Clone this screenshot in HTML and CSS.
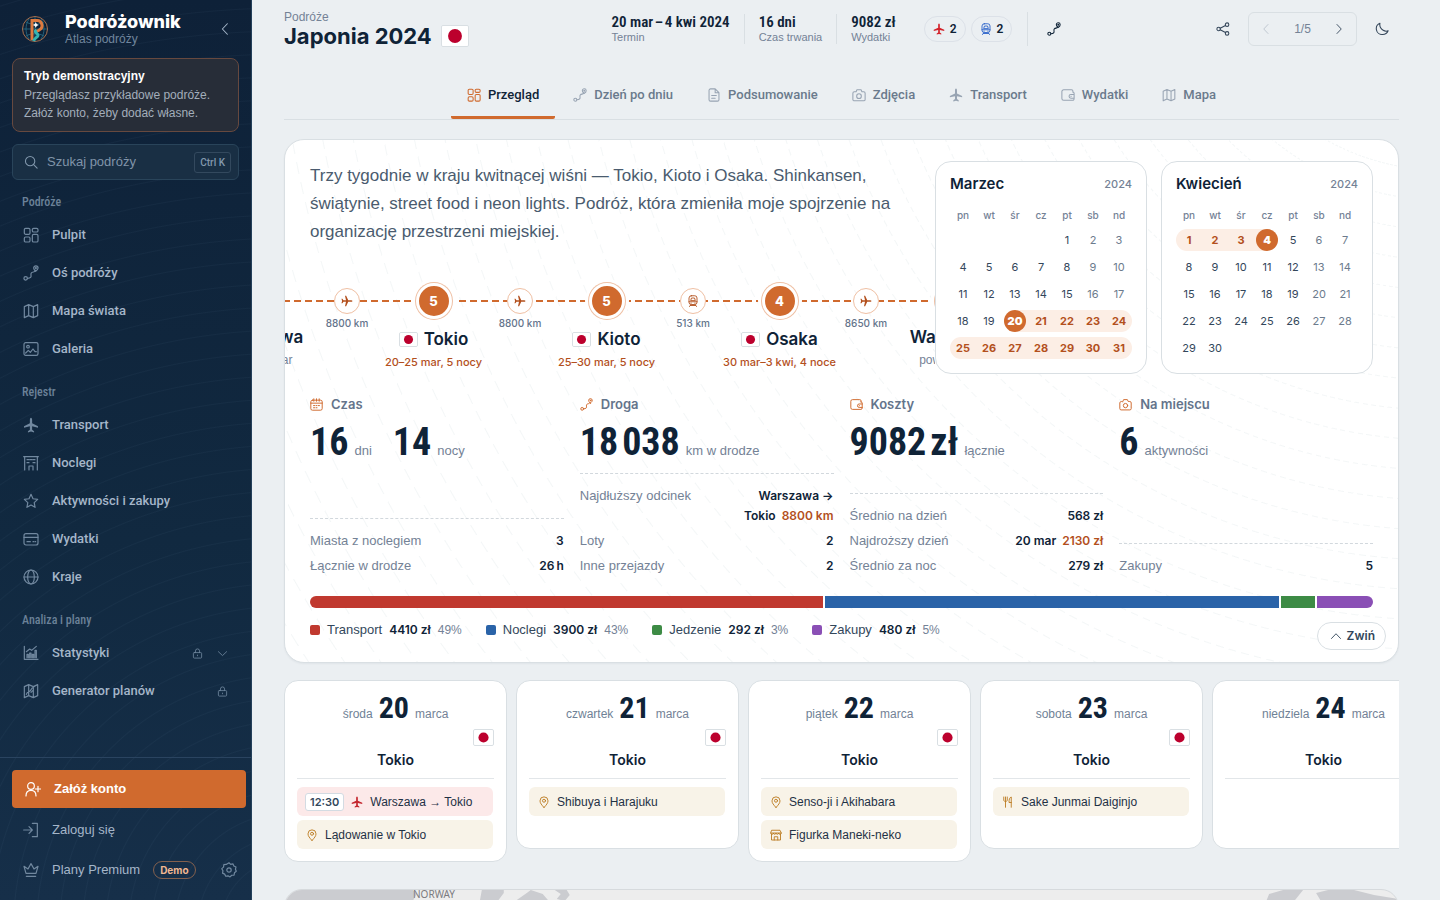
FILE: index.html
```html
<!DOCTYPE html>
<html lang="pl">
<head>
<meta charset="utf-8">
<meta name="viewport" content="width=device-width, initial-scale=1">
<title>Japonia 2024 – Podróżownik</title>
<link rel="stylesheet" href="styles.css">
</head>
<body>
<svg class="sprite" aria-hidden="true">
  <symbol id="i-grid" viewBox="0 0 24 24"><rect x="2" y="2" width="8.500" height="9" rx="2"/><rect x="14" y="2" width="8.500" height="5.500" rx="2"/><rect x="2" y="15" width="8.500" height="7.500" rx="2"/><rect x="14" y="11" width="8.500" height="11.500" rx="2"/></symbol>
  <symbol id="i-route" viewBox="0 0 24 24"><circle cx="4" cy="20" r="2.600"/><path d="M6.600 20c5 0 6-2 5.400-5s1-4 3.500-4.500S18 9 18.500 8"/><path d="M19 9.500c-2-2-3-3.400-3-5a3.300 3.300 0 0 1 6.600 0c0 1.600-1.600 3.500-3.600 5z"/><circle cx="19.300" cy="4.600" r=".8"/></symbol>
  <symbol id="i-map" viewBox="0 0 24 24"><path d="M2 5.500 8.500 2.500l7 3 6.500-3v16.500l-6.500 3-7-3-6.500 3zM8.500 2.500V19M15.500 5.500V22"/></symbol>
  <symbol id="i-plan" viewBox="0 0 24 24"><path d="M2 5.500 8.500 2.500l7 3 6.500-3v16.500l-6.500 3-7-3-6.500 3zM8.500 2.500V19M15.500 5.500V22M5 17c2-6 5-2 7-7s4-3 7-6M12 14l3-3"/></symbol>
  <symbol id="i-image" viewBox="0 0 24 24"><rect x="1.500" y="2.500" width="21" height="19" rx="2.500"/><circle cx="7.500" cy="8.500" r="2"/><path d="m4 18 4-4 3 3 4-5 3 4h2"/></symbol>
  <symbol id="i-plane" viewBox="0 0 24 24"><path class="solid" d="M12 1c1.100 0 1.700 1.600 1.700 3.500v5l8.800 4.200v2.300l-8.800-2v5l2.900 2.200v1.900L12 21.800l-4.600 1.300v-1.900l2.900-2.200v-5l-8.800 2v-2.300l8.800-4.200v-5C10.300 2.600 10.900 1 12 1z"/></symbol>
  <symbol id="i-hotel" viewBox="0 0 24 24"><path d="M2.500 22.500V2.500h19v20M1 2.500h22M6 7h3M10.500 7h3M15 7h3M6 11.500h3M15 11.500h3M9 22.500v-6h6v6"/></symbol>
  <symbol id="i-star" viewBox="0 0 24 24"><path d="m12 2 3 6.600 7 .9-5.200 4.900 1.300 7.100L12 18l-6.100 3.500 1.300-7.100L2 9.500l7-.9z"/></symbol>
  <symbol id="i-card" viewBox="0 0 24 24"><rect x="1.500" y="4" width="21" height="17" rx="3"/><path d="M1.500 9.500h21M6 16h5M15 16h1M18 16h1"/></symbol>
  <symbol id="i-globe" viewBox="0 0 24 24"><circle cx="12" cy="12" r="10.500"/><ellipse cx="12" cy="12" rx="5" ry="10.500"/><path d="M1.500 12h21"/></symbol>
  <symbol id="i-chart" viewBox="0 0 24 24"><path d="M2 2v19.500h20.500M5 10l5-4 3 2 7-6M6 19v-5h2v5M10 19v-7h2v7M14 19v-5h2v5M18 19V8h2v11"/></symbol>
  <symbol id="i-lock" viewBox="0 0 24 24"><rect x="3" y="10" width="18" height="12" rx="2"/><path d="M7.500 10V6.500a4.500 4.500 0 0 1 9 0V10M12 15.500v1.500"/></symbol>
  <symbol id="i-down" viewBox="0 0 24 24"><path d="m3 8 9 8.500L21 8"/></symbol>
  <symbol id="i-up" viewBox="0 0 24 24"><path d="m3 17 9-9.500 9 9.500"/></symbol>
  <symbol id="i-left" viewBox="0 0 24 24"><path d="m16 3-8.500 9 8.500 9"/></symbol>
  <symbol id="i-right" viewBox="0 0 24 24"><path d="m8 3 8.500 9L8 21"/></symbol>
  <symbol id="i-search" viewBox="0 0 24 24"><circle cx="10.500" cy="10.500" r="8"/><path d="m16.500 16.500 6 6"/></symbol>
  <symbol id="i-useradd" viewBox="0 0 24 24"><circle cx="9" cy="7.500" r="5"/><path d="M1.500 22.500c0-5 3-8.500 7.500-8.500s7.500 3.500 7.500 8.500M19.500 8v8M15.500 12h8"/></symbol>
  <symbol id="i-login" viewBox="0 0 24 24"><path d="M1 12h13M9 7l5 5-5 5M14 2h7.500v20H14"/></symbol>
  <symbol id="i-crown" viewBox="0 0 24 24"><path d="m4.500 17-3-10.500 6 4L12 2.500l4.500 8 6-4-3 10.500zM5 21.500h14"/></symbol>
  <symbol id="i-gear" viewBox="0 0 24 24"><path d="M12 1.200 14.500 3.500 18 2.800l1.300 3.100 3.200 1.500-.8 3.400 1.200 3.200-2.700 2.200-.6 3.500-3.500.2-2.600 2.500-3-1.700-3.400.7-1.600-3.200-3.200-1.500.6-3.500L1.200 10l2.600-2.300L4.300 4l3.500-.3z"/><circle cx="12" cy="12" r="3.300"/></symbol>
  <symbol id="i-share" viewBox="0 0 24 24"><circle cx="4.500" cy="12" r="3"/><circle cx="19" cy="4.500" r="3"/><circle cx="19" cy="19.500" r="3"/><path d="m7.200 10.600 9-4.700M7.200 13.400l9 4.700"/></symbol>
  <symbol id="i-moon" viewBox="0 0 24 24"><path d="M8.500 2C3.500 4 1.500 8.500 2.500 13.500c1 5 5.500 8.500 10.500 8 4.500-.4 8-2.900 9.500-6.500-2 .8-5.500 1-8.500-.8-4.500-2.700-6.500-7.200-5.500-12.200z"/></symbol>
  <symbol id="i-file" viewBox="0 0 24 24"><path d="M14 1.500H6a2.500 2.500 0 0 0-2.500 2.500v16A2.500 2.500 0 0 0 6 22.500h12a2.500 2.500 0 0 0 2.500-2.500V8zM14 1.500V8h6.500M8 13h8M8 17.500h6"/></symbol>
  <symbol id="i-camera" viewBox="0 0 24 24"><path d="M7 6.500 8.500 3h7L17 6.500h3A2.500 2.500 0 0 1 22.500 9v10.500A2.500 2.500 0 0 1 20 22H4a2.500 2.500 0 0 1-2.500-2.500V9A2.500 2.500 0 0 1 4 6.500z"/><circle cx="12" cy="14" r="4"/></symbol>
  <symbol id="i-wallet" viewBox="0 0 24 24"><path d="M20.500 7V5.500A2.500 2.500 0 0 0 18 3H4.500a3 3 0 0 0-3 3v12a3 3 0 0 0 3 3H20a2.500 2.500 0 0 0 2.500-2.500v-9A2.500 2.500 0 0 0 20 7M22.500 11H17a3.200 3.200 0 0 0 0 6.400h5.500M17 14.200h.5"/></symbol>
  <symbol id="i-calendar" viewBox="0 0 24 24"><rect x="1.500" y="4" width="21" height="18.500" rx="3"/><path d="M1.500 9.500h21M7 1.500V6M12 1.500V6M17 1.500V6M6.500 14h2M11 14h2M15.500 14h2M6.500 18h2M11 18h2"/></symbol>
  <symbol id="i-train" viewBox="0 0 24 24"><rect x="4" y="1.500" width="16" height="17.500" rx="4.500"/><path d="M7.500 10.500 9 6h6l1.500 4.500zM4 13.500h16M8 16.300h.5M15.500 16.300h.5M8 19l-3 4M16 19l3 4M7 21h10"/></symbol>
  <symbol id="i-pin" viewBox="0 0 24 24"><path d="M12 23c-5-5.500-8-9-8-13.300a8 8 0 0 1 16 0C20 14 17 17.500 12 23z"/><circle cx="12" cy="9.500" r="3"/></symbol>
  <symbol id="i-shop" viewBox="0 0 24 24"><path d="M4 2.500h16L22.500 8c0 3.500-5.200 3.500-5.200 0 0 3.500-5.300 3.500-5.300 0 0 3.500-5.300 3.500-5.300 0 0 3.500-5.200 3.500-5.200 0zM3 10.500v11.500h18V10.500M1.500 8h21M8.500 22v-6.500h7V22"/></symbol>
  <symbol id="i-fork" viewBox="0 0 24 24"><path d="M3.500 2v6c0 4 7 4 7 0V2M7 2v20.500M18.500 22.500V2c-3.500 1-4.500 5-4.500 11h4.500"/></symbol>
  <symbol id="i-jp" viewBox="0 0 30 22"><rect width="30" height="22" fill="#fff" stroke="none"/><circle cx="15" cy="11" r="8" fill="#bc002d" stroke="none"/></symbol>
</svg>

<div class="app">
<aside class="sidebar">
  <div class="brand">
    <svg class="logo" viewBox="0 0 28 28" aria-hidden="true">
      <circle cx="14" cy="14" r="12.500" fill="#0b2036" stroke="#a8704f" stroke-width="1"/>
      <path d="M2 14h24M14 2v24M5 7c5 3 13 3 18 0M5 21c5-3 13-3 18 0M8 4c-4 6-4 14 0 20M20 4c4 6 4 14 0 20" fill="none" stroke="#2a6f88" stroke-width=".8"/>
      <path d="M11 25V5.500h4.500a5 5 0 0 1 3 9.300c-1 .9-2 1.200-3.500 1.500" fill="none" stroke="#dd7a3f" stroke-width="3"/>
      <path d="M15.500 15c-4 2.500 3.500 3.500 1 6.500-1.500 1.500-3 2-4 4.500" fill="none" stroke="#35b3b0" stroke-width="3"/>
      <path d="m14.800 7 .9 2.100 2.100.9-2.100.9-.9 2.100-.9-2.100-2.100-.9 2.100-.9z" fill="#fff"/>
    </svg>
    <div class="brand-text"><strong>Podróżownik</strong><span>Atlas podróży</span></div>
    <button class="bare collapse" aria-label="Zwiń menu"><svg class="ic s14"><use href="#i-left"/></svg></button>
  </div>
  <div class="demo"><strong>Tryb demonstracyjny</strong><p>Przeglądasz przykładowe podróże.<br>Załóż konto, żeby dodać własne.</p></div>
  <label class="search"><svg class="ic s14"><use href="#i-search"/></svg><input type="search" placeholder="Szukaj podróży" aria-label="Szukaj podróży"><kbd>Ctrl K</kbd></label>
  <nav class="menu">
    <h2>Podróże</h2>
    <a href="#"><svg class="ic"><use href="#i-grid"/></svg>Pulpit</a>
    <a href="#"><svg class="ic"><use href="#i-route"/></svg>Oś podróży</a>
    <a href="#"><svg class="ic"><use href="#i-map"/></svg>Mapa świata</a>
    <a href="#"><svg class="ic"><use href="#i-image"/></svg>Galeria</a>
    <h2>Rejestr</h2>
    <a href="#"><svg class="ic"><use href="#i-plane"/></svg>Transport</a>
    <a href="#"><svg class="ic"><use href="#i-hotel"/></svg>Noclegi</a>
    <a href="#"><svg class="ic"><use href="#i-star"/></svg>Aktywności i zakupy</a>
    <a href="#"><svg class="ic"><use href="#i-card"/></svg>Wydatki</a>
    <a href="#"><svg class="ic"><use href="#i-globe"/></svg>Kraje</a>
    <h2>Analiza i plany</h2>
    <a href="#"><svg class="ic"><use href="#i-chart"/></svg>Statystyki<span class="marks"><svg class="ic s11"><use href="#i-lock"/></svg><svg class="ic s11"><use href="#i-down"/></svg></span></a>
    <a href="#"><svg class="ic"><use href="#i-plan"/></svg>Generator planów<span class="marks"><svg class="ic s11"><use href="#i-lock"/></svg></span></a>
  </nav>
  <div class="account">
    <a class="cta" href="#"><svg class="ic"><use href="#i-useradd"/></svg>Załóż konto</a>
    <a href="#"><svg class="ic"><use href="#i-login"/></svg>Zaloguj się</a>
    <div class="premium"><a href="#"><svg class="ic"><use href="#i-crown"/></svg>Plany Premium<span class="tag">Demo</span></a><button class="bare" aria-label="Ustawienia"><svg class="ic"><use href="#i-gear"/></svg></button></div>
  </div>
</aside>

<main class="main">
  <header class="top">
    <div class="trip"><a href="#">Podróże</a><h1>Japonia 2024<svg class="flag f-lg" role="img" aria-label="Japonia"><use href="#i-jp"/></svg></h1></div>
    <div class="facts">
      <div class="fact"><b>20 mar&hairsp;–&hairsp;4 kwi 2024</b><span>Termin</span></div>
      <div class="fact"><b>16 dni</b><span>Czas trwania</span></div>
      <div class="fact"><b>9082 zł</b><span>Wydatki</span></div>
      <div class="modes"><span class="mode air"><svg class="ic s12"><use href="#i-plane"/></svg>2</span><span class="mode rail"><svg class="ic s12"><use href="#i-train"/></svg>2</span></div>
      <button class="bare path" aria-label="Trasa"><svg class="ic s14"><use href="#i-route"/></svg></button>
    </div>
    <div class="actions">
      <button class="bare" aria-label="Udostępnij"><svg class="ic s14"><use href="#i-share"/></svg></button>
      <div class="pager"><button class="bare" aria-label="Poprzednia" disabled><svg class="ic s12"><use href="#i-left"/></svg></button><span>1/5</span><button class="bare" aria-label="Następna"><svg class="ic s12"><use href="#i-right"/></svg></button></div>
      <button class="bare" aria-label="Tryb ciemny"><svg class="ic s14"><use href="#i-moon"/></svg></button>
    </div>
  </header>

  <nav class="tabs">
    <a class="on" href="#"><svg class="ic s14"><use href="#i-grid"/></svg>Przegląd</a>
    <a href="#"><svg class="ic s14"><use href="#i-route"/></svg>Dzień po dniu</a>
    <a href="#"><svg class="ic s14"><use href="#i-file"/></svg>Podsumowanie</a>
    <a href="#"><svg class="ic s14"><use href="#i-camera"/></svg>Zdjęcia</a>
    <a href="#"><svg class="ic s14"><use href="#i-plane"/></svg>Transport</a>
    <a href="#"><svg class="ic s14"><use href="#i-wallet"/></svg>Wydatki</a>
    <a href="#"><svg class="ic s14"><use href="#i-map"/></svg>Mapa</a>
  </nav>

  <section class="hero">
    <div class="intro">
      <div class="story">
        <p>Trzy tygodnie w kraju kwitnącej wiśni — Tokio, Kioto i Osaka. Shinkansen, świątynie, street food i neon lights. Podróż, która zmieniła moje spojrzenie na organizację przestrzeni miejskiej.</p>
        <div class="route">
          <ol>
            <li class="stop end"><i></i><strong>Warszawa</strong><small>start 20 mar</small></li>
            <li class="leg"><i><svg class="ic s12 east"><use href="#i-plane"/></svg></i><span>8800 km</span></li>
            <li class="stop"><i>5</i><strong><svg class="flag f-sm"><use href="#i-jp"/></svg>Tokio</strong><small>20–25 mar, 5 nocy</small></li>
            <li class="leg"><i><svg class="ic s12 east"><use href="#i-plane"/></svg></i><span>8800 km</span></li>
            <li class="stop"><i>5</i><strong><svg class="flag f-sm"><use href="#i-jp"/></svg>Kioto</strong><small>25–30 mar, 5 nocy</small></li>
            <li class="leg"><i><svg class="ic s12"><use href="#i-train"/></svg></i><span>513 km</span></li>
            <li class="stop"><i>4</i><strong><svg class="flag f-sm"><use href="#i-jp"/></svg>Osaka</strong><small>30 mar–3 kwi, 4 noce</small></li>
            <li class="leg"><i><svg class="ic s12 east"><use href="#i-plane"/></svg></i><span>8650 km</span></li>
            <li class="stop end"><i></i><strong>Warszawa</strong><small>powrót 4 kwi</small></li>
          </ol>
        </div>
      </div>
      <table class="month">
        <caption><strong>Marzec</strong><span>2024</span></caption>
        <thead><tr><th>pn</th><th>wt</th><th>śr</th><th>cz</th><th>pt</th><th>sb</th><th>nd</th></tr></thead>
        <tbody>
        <tr><td></td><td></td><td></td><td></td><td><span>1</span></td><td><span>2</span></td><td><span>3</span></td></tr>
        <tr><td><span>4</span></td><td><span>5</span></td><td><span>6</span></td><td><span>7</span></td><td><span>8</span></td><td><span>9</span></td><td><span>10</span></td></tr>
        <tr><td><span>11</span></td><td><span>12</span></td><td><span>13</span></td><td><span>14</span></td><td><span>15</span></td><td><span>16</span></td><td><span>17</span></td></tr>
        <tr><td><span>18</span></td><td><span>19</span></td><td class="in from"><span><b>20</b></span></td><td class="in"><span>21</span></td><td class="in"><span>22</span></td><td class="in"><span>23</span></td><td class="in"><span>24</span></td></tr>
        <tr><td class="in"><span>25</span></td><td class="in"><span>26</span></td><td class="in"><span>27</span></td><td class="in"><span>28</span></td><td class="in"><span>29</span></td><td class="in"><span>30</span></td><td class="in"><span>31</span></td></tr>
        </tbody>
      </table>
      <table class="month">
        <caption><strong>Kwiecień</strong><span>2024</span></caption>
        <thead><tr><th>pn</th><th>wt</th><th>śr</th><th>cz</th><th>pt</th><th>sb</th><th>nd</th></tr></thead>
        <tbody>
        <tr><td class="in"><span>1</span></td><td class="in"><span>2</span></td><td class="in"><span>3</span></td><td class="in to"><span><b>4</b></span></td><td><span>5</span></td><td><span>6</span></td><td><span>7</span></td></tr>
        <tr><td><span>8</span></td><td><span>9</span></td><td><span>10</span></td><td><span>11</span></td><td><span>12</span></td><td><span>13</span></td><td><span>14</span></td></tr>
        <tr><td><span>15</span></td><td><span>16</span></td><td><span>17</span></td><td><span>18</span></td><td><span>19</span></td><td><span>20</span></td><td><span>21</span></td></tr>
        <tr><td><span>22</span></td><td><span>23</span></td><td><span>24</span></td><td><span>25</span></td><td><span>26</span></td><td><span>27</span></td><td><span>28</span></td></tr>
        <tr><td><span>29</span></td><td><span>30</span></td><td></td><td></td><td></td><td></td><td></td></tr>
        </tbody>
      </table>
    </div>

    <div class="stats">
      <section><h3><svg class="ic s13"><use href="#i-calendar"/></svg>Czas</h3>
        <p class="big"><span><b>16</b>dni</span><span><b>14</b>nocy</span></p>
        <dl><div><dt>Miasta z noclegiem</dt><dd>3</dd></div><div><dt>Łącznie w drodze</dt><dd>26&thinsp;h</dd></div></dl></section>
      <section><h3><svg class="ic s13"><use href="#i-route"/></svg>Droga</h3>
        <p class="big"><span><b>18&hairsp;038</b>km w drodze</span></p>
        <dl><div><dt>Najdłuższy odcinek</dt><dd>Warszawa →<br>Tokio <em>8800 km</em></dd></div><div><dt>Loty</dt><dd>2</dd></div><div><dt>Inne przejazdy</dt><dd>2</dd></div></dl></section>
      <section><h3><svg class="ic s13"><use href="#i-wallet"/></svg>Koszty</h3>
        <p class="big"><span><b>9082&hairsp;zł</b>łącznie</span></p>
        <dl><div><dt>Średnio na dzień</dt><dd>568 zł</dd></div><div><dt>Najdroższy dzień</dt><dd>20 mar <em>2130 zł</em></dd></div><div><dt>Średnio za noc</dt><dd>279 zł</dd></div></dl></section>
      <section><h3><svg class="ic s13"><use href="#i-camera"/></svg>Na miejscu</h3>
        <p class="big"><span><b>6</b>aktywności</span></p>
        <dl><div><dt>Zakupy</dt><dd>5</dd></div></dl></section>
    </div>

    <div class="bar"><i class="c-red" style="flex-grow:4410"></i><i class="c-blue" style="flex-grow:3900"></i><i class="c-green" style="flex-grow:292"></i><i class="c-violet" style="flex-grow:480"></i></div>
    <ul class="legend">
      <li><i class="c-red"></i>Transport<b>4410 zł</b><small>49%</small></li>
      <li><i class="c-blue"></i>Noclegi<b>3900 zł</b><small>43%</small></li>
      <li><i class="c-green"></i>Jedzenie<b>292 zł</b><small>3%</small></li>
      <li><i class="c-violet"></i>Zakupy<b>480 zł</b><small>5%</small></li>
    </ul>
    <button class="fold"><svg class="ic s12"><use href="#i-up"/></svg>Zwiń</button>
  </section>

  <div class="days">
    <article><h3><span>środa</span><b>20</b><small>marca</small></h3><svg class="flag f-md"><use href="#i-jp"/></svg><h4>Tokio</h4>
      <ul><li class="fly"><time>12:30</time><svg class="ic s12"><use href="#i-plane"/></svg>Warszawa → Tokio</li><li><svg class="ic s12"><use href="#i-pin"/></svg>Lądowanie w Tokio</li></ul></article>
    <article><h3><span>czwartek</span><b>21</b><small>marca</small></h3><svg class="flag f-md"><use href="#i-jp"/></svg><h4>Tokio</h4>
      <ul><li><svg class="ic s12"><use href="#i-pin"/></svg>Shibuya i Harajuku</li></ul></article>
    <article><h3><span>piątek</span><b>22</b><small>marca</small></h3><svg class="flag f-md"><use href="#i-jp"/></svg><h4>Tokio</h4>
      <ul><li><svg class="ic s12"><use href="#i-pin"/></svg>Senso-ji i Akihabara</li><li><svg class="ic s12"><use href="#i-shop"/></svg>Figurka Maneki-neko</li></ul></article>
    <article><h3><span>sobota</span><b>23</b><small>marca</small></h3><svg class="flag f-md"><use href="#i-jp"/></svg><h4>Tokio</h4>
      <ul><li><svg class="ic s12"><use href="#i-fork"/></svg>Sake Junmai Daiginjo</li></ul></article>
    <article><h3><span>niedziela</span><b>24</b><small>marca</small></h3><svg class="flag f-md"><use href="#i-jp"/></svg><h4>Tokio</h4><ul></ul></article>
  </div>

  <section class="world" aria-label="Mapa podróży">
    <svg viewBox="0 0 1114 120" preserveAspectRatio="xMinYMin slice" aria-hidden="true"><path d="M0 0h128l4 4-6 10-20 8H0zM197 0h22v3l-6 8h-18zM232 10l10-7 4-3 12 4 6 7-8 2-10-3-6 4zM270 0h12l3 5-5 6-8-2 4-5zM985 4l14-4h20l-8 10-30 4zM1032 3l12-3h26l20 5 24 4v14h-70z" fill="#cbccd0"/></svg>
    <span>NORWAY</span>
  </section>
</main>
</div>
</body>
</html>
```
FILE: styles.css
```css
:root {
  --sans: "Liberation Sans", Arial, sans-serif;
  --medium: Inter, "Liberation Sans", sans-serif;
  --wide: Inter, "DejaVu Sans", sans-serif;
  --label: Roboto, "Liberation Sans", sans-serif;
  --narrow: "Roboto Condensed", "Liberation Sans Narrow", Roboto, sans-serif;
  --ink: #0f2337;
  --slate: #4a5b6e;
  --muted: #748296;
  --accent: #d06a2e;
  --rust: #b3501d;
  --line: #d9dfe3;
}
* { box-sizing: border-box; }
body { margin: 0; font: 13px/20px var(--sans); color: var(--ink); background: #ebeff2; }
h1, h2, h3, h4, p, ul, ol, dl, dd { margin: 0; padding: 0; }
ul, ol { list-style: none; }
a { color: inherit; text-decoration: none; }
i, em { font-style: normal; }
.sprite { position: absolute; width: 0; height: 0; }
.solid { fill: currentColor; stroke: none; }
.ic { width: 16px; height: 16px; flex: none; fill: none; stroke: currentColor; stroke-width: 1.8; stroke-linecap: round; stroke-linejoin: round; }
.s14 { width: 14px; height: 14px; }
.s13 { width: 13px; height: 13px; }
.s12 { width: 12px; height: 12px; }
.s11 { width: 11px; height: 11px; }
.flag { flex: none; border: 1px solid var(--line); border-radius: 2px; background: #fff; }
.f-lg { width: 28px; height: 22px; }
.f-md { width: 21px; height: 17px; }
.f-sm { width: 19px; height: 15px; }
.bare { display: flex; align-items: center; justify-content: center; width: 34px; height: 34px; padding: 0; border: 0; background: none; color: inherit; }
.bare:disabled { opacity: .4; }

.app { display: flex; height: 100vh; overflow: hidden; }

.sidebar { position: relative; flex: none; width: 252px; display: flex; flex-direction: column; padding-top: 10px; color: #a5b6c9; background: linear-gradient(#0e2138, #112940 60%, #162f49); border-right: 1px solid #24405b; }
.sidebar::before { content: ""; position: absolute; inset: 0; background: repeating-radial-gradient(circle at 115% 103%, transparent 0 21px, rgba(130, 165, 195, .05) 22px, transparent 23px); }
.sidebar > * { position: relative; }
.brand { display: flex; align-items: center; height: 38px; padding: 0 9px 0 21px; }
.logo { width: 28px; height: 28px; }
.brand-text { flex: 1; display: flex; flex-direction: column; margin-left: 16px; }
.brand-text strong { font: 800 18px/20px var(--wide); color: #fff; }
.brand-text span { font-size: 12px; line-height: 14px; color: #71869d; }
.demo { margin: 10px 12px 0; padding: 8px 11px 9px; border: 1px solid #67493f; border-radius: 8px; background: #272d38; font-size: 12px; line-height: 18px; color: #a3aebb; }
.demo strong { color: #fff; line-height: 19px; }
.search { display: flex; align-items: center; gap: 9px; height: 36px; margin: 12px 12px 0; padding: 0 7px 0 11px; border: 1px solid #29445a; border-radius: 6px; background: #192f44; color: #8298ad; }
.search input { flex: 1; min-width: 0; padding: 0; border: 0; outline: 0; background: none; font: 13px/20px var(--sans); color: #fff; }
.search input::placeholder { color: #8094a9; opacity: 1; }
.search kbd { padding: 0 5px; border: 1px solid #33495e; border-radius: 3px; font: 500 10px/19px var(--label); }
.menu { flex: 1; min-height: 0; overflow: hidden; padding-top: 12px; }
.menu h2 { padding-left: 22px; font: 500 12px/20px var(--narrow); color: #6b8198; }
.menu a { display: flex; align-items: center; gap: 13px; height: 38px; padding: 0 23px; font: 500 13px/20px var(--label); }
.menu a + h2 { margin-top: 14px; }
.menu h2 + a { margin-top: 4px; }
.menu .ic { color: #71889f; }
.marks { display: flex; gap: 14px; margin-left: auto; }
.account { padding: 12px 5px 11px 12px; border-top: 1px solid #2a4460; }
.account a { display: flex; align-items: center; gap: 13px; height: 42px; padding-left: 11px; }
.account .ic { color: #71889f; }
.account .cta { height: 38px; margin-bottom: 1px; padding-left: 13px; border-radius: 4px; background: var(--accent); color: #fff; font: 700 13px/20px var(--sans); }
.account .cta .ic { color: #fff; }
.premium { display: flex; align-items: center; justify-content: space-between; height: 38px; }
.tag { padding: 0 6px; border: 1px solid #83604e; border-radius: 10px; font: 700 10px/16px var(--medium); color: #f0b791; }

.main { flex: 1; min-width: 0; display: flex; flex-direction: column; padding: 0 41px 0 32px; overflow: hidden; }
.top { flex: none; display: grid; grid-template-columns: 1fr auto 1fr; align-items: center; height: 58px; }
.trip { display: flex; flex-direction: column; padding-bottom: 3px; }
.trip a { font-size: 12px; line-height: 16px; color: var(--muted); }
.trip h1 { display: flex; align-items: center; gap: 9px; font: 700 22px/22px var(--wide); }
.facts { display: flex; align-items: center; }
.fact { padding-right: 14px; margin-right: 14px; border-right: 1px solid var(--line); }
.fact:nth-child(3) { border: 0; }
.fact b, .fact span { display: block; }
.fact b { font: 600 15px/16px var(--narrow); }
.fact span { font-size: 11px; line-height: 14px; color: var(--muted); }
.modes { display: flex; gap: 5px; padding-right: 15px; border-right: 1px solid var(--line); line-height: 34px; }
.mode { display: flex; align-items: center; gap: 5px; height: 26px; margin: 4px 0; padding: 0 8px; border: 1px solid #dce1e8; border-radius: 13px; font: 600 12px/24px var(--label); }
.air .ic { color: #d3232b; }
.rail .ic { color: #2b63c9; }
.path { margin-left: 9px; }
.actions { display: flex; justify-content: flex-end; gap: 8px; color: #34465a; }
.pager { display: flex; align-items: center; justify-content: space-between; width: 109px; height: 34px; border: 1px solid var(--line); border-radius: 6px; color: var(--muted); font-size: 12px; }
.pager .bare:last-child { color: #34465a; }
.tabs { flex: none; display: flex; justify-content: center; gap: 2px; margin-top: 14px; border-bottom: 1px solid var(--line); color: #6a7a8c; }
.tabs a { display: flex; align-items: center; gap: 7px; height: 47px; padding: 2px 16px 0; border-bottom: 3px solid transparent; font: 500 13px/20px var(--label); }
.tabs .ic { color: #98a4b3; }
.tabs .on { border-color: var(--accent); border-radius: 2px; color: var(--ink); }
.tabs .on .ic { color: var(--accent); }

.hero { position: relative; flex: none; margin-top: 19px; padding: 21px 25px 22px; border: 1px solid var(--line); border-radius: 20px; background: #fff; overflow: hidden; box-shadow: 0 1px 2px rgba(20, 40, 60, .05); }
.hero::before { content: ""; position: absolute; inset: 0; background: repeating-radial-gradient(circle at 104% -40%, transparent 0 28px, rgba(60, 110, 120, .06) 29px, transparent 30px); mask: repeating-conic-gradient(from 0deg at 104% -40%, #000 0 .6deg, transparent .6deg 1deg); }
.hero > * { position: relative; }
.intro { display: flex; gap: 14px; }
.story { flex: 1; min-width: 0; margin-right: -14px; }
.story p { max-width: 590px; padding-top: 1px; font-size: 17px; line-height: 28px; color: var(--slate); }
.route { margin: 34px 0 0 -26px; overflow: hidden; }
.route ol { display: flex; height: 94px; margin-left: -67px; background: repeating-linear-gradient(90deg, var(--accent) 0 7px, transparent 7px 11px) 0 20px / 100% 2px no-repeat; }
.stop, .leg { flex: none; display: flex; flex-direction: column; align-items: center; white-space: nowrap; }
.stop { width: 87px; }
.leg { width: 86px; padding-top: 8px; }
.stop i { display: grid; place-items: center; flex: none; width: 36px; height: 36px; margin: 3px 0; border: 3px solid #fff; border-radius: 50%; background: var(--accent); color: #fff; font: 800 13px/20px var(--medium); box-shadow: 0 0 0 1px #efc0a4, 0 0 0 4px #fff; }
.stop strong { display: flex; align-items: center; gap: 6px; margin-top: 7px; font: 600 17px/20px var(--wide); }
.stop small { margin-top: 3px; font: 500 11px/20px var(--medium); color: var(--rust); }
.stop.end strong { margin-top: 5px; }
.stop.end small { font: 12px/20px var(--sans); color: var(--muted); }
.leg i { display: grid; place-items: center; width: 26px; height: 26px; border: 1px solid #efc0a4; border-radius: 50%; background: #fff; color: var(--rust); }
.leg span { margin-top: 2px; font: 500 10px/14px var(--medium); color: #64748b; }
.east { transform: rotate(90deg); }

.month { flex: none; display: block; width: 212px; padding: 0 14px 9px; border: 1px solid var(--line); border-radius: 16px; background: #fff; border-spacing: 0; }
.month caption { display: flex; justify-content: space-between; align-items: center; height: 43px; }
.month caption strong { font: 600 15px/20px var(--wide); }
.month caption span { font: 500 11px/20px var(--medium); color: var(--muted); }
.month th, .month td { width: 26px; padding: 0; text-align: center; }
.month th { height: 21px; vertical-align: top; font: 500 10px/20px var(--medium); color: var(--muted); }
.month td { height: 27px; font: 11px/22px var(--medium); color: #33475b; }
.month td span { display: block; height: 22px; }
.month td:nth-child(n+6) { color: #6c7b8d; }
.month .in, .month .in:nth-child(n+6) { color: var(--rust); font-weight: 700; }
.month .in span { background: #fceee5; }
.month .in:first-child span { border-radius: 11px 0 0 11px; }
.month .in:last-child span { border-radius: 0 11px 11px 0; }
.month .from span { background: linear-gradient(90deg, transparent 50%, #fceee5 50%); }
.month .to span { background: linear-gradient(90deg, #fceee5 50%, transparent 50%); }
.month td b { display: block; width: 22px; height: 22px; margin: 0 auto; border-radius: 50%; background: var(--accent); color: #fff; }

.stats { display: grid; grid-template-columns: repeat(4, 1fr); gap: 16px; margin-top: 20px; }
.stats section { display: flex; flex-direction: column; }
.stats h3 { display: flex; align-items: center; gap: 8px; font: 600 13px/20px var(--wide); color: #64748b; }
.stats h3 .ic { color: var(--accent); }
.big { display: flex; gap: 21px; padding: 8px 0 2px; line-height: 40px; }
.big span { display: flex; align-items: baseline; gap: 6px; color: var(--muted); font-size: 13px; }
.big b { font: 700 38px/40px var(--narrow); color: var(--ink); }
.stats dl { display: grid; gap: 5px; margin-top: auto; padding-top: 12px; border-top: 1px dashed #d2d8dd; }
.stats dl div { display: flex; justify-content: space-between; }
.stats dt { color: var(--muted); }
.stats dd { text-align: right; font: 600 12px/20px var(--medium); }
.stats em { margin-left: 3px; color: var(--rust); }
.bar { display: flex; gap: 2px; height: 12px; margin-top: 20px; border-radius: 6px; overflow: hidden; }
.bar i { flex-basis: 0; }
.c-red { background: #c0392f; }
.c-blue { background: #2a63a8; }
.c-green { background: #3d8b45; }
.c-violet { background: #8a4fb5; }
.legend { display: flex; gap: 24px; margin-top: 12px; color: #33475b; }
.legend li { display: flex; align-items: center; }
.legend i { width: 10px; height: 10px; margin-right: 7px; border-radius: 2px; }
.legend b { margin: 0 7px; font: 600 12px/20px var(--medium); color: var(--ink); }
.legend small { font-size: 12px; color: var(--muted); }
.hero .fold { position: absolute; right: 12px; bottom: 12px; display: flex; align-items: center; gap: 5px; height: 28px; padding: 0 10px 0 12px; border: 1px solid var(--line); border-radius: 14px; background: #fff; font: 600 12px/20px var(--medium); color: #33475b; }

.days { flex: none; display: flex; align-items: flex-start; gap: 9px; margin-top: 17px; padding-bottom: 27px; overflow: hidden; }
.days article { flex: none; display: flex; flex-direction: column; width: 223px; min-height: 169px; padding: 10px 12px 12px; border: 1px solid var(--line); border-radius: 14px; background: #fff; }
.days h3 { display: flex; justify-content: center; align-items: baseline; gap: 6px; height: 34px; font: 500 12px/20px var(--sans); color: #6f8296; }
.days h3 b { font: 700 30px/34px var(--narrow); color: var(--ink); }
.days h3 small { font-size: 12px; color: var(--muted); }
.days .flag { align-self: flex-end; margin: 4px 0; }
.days h4 { font: 600 14px/20px var(--wide); text-align: center; }
.days ul { display: grid; gap: 4px; margin-top: 8px; padding-top: 8px; border-top: 1px solid #e2e6e9; }
.days li { display: flex; align-items: center; gap: 7px; height: 29px; margin-right: 1px; padding: 0 9px; border-radius: 6px; background: #f8f3e8; font-size: 12px; color: #1f3145; }
.days li .ic { color: #bb7a1f; }
.days .fly { background: #fce9e9; padding-left: 8px; }
.days .fly .ic { color: #c4262e; }
.days time { padding: 0 4px; border: 1px solid #d3dbe2; border-radius: 3px; background: #fff; font: 600 11px/16px var(--medium); color: #33475b; }

.world { position: relative; flex: 1 0 120px; border: 1px solid #d6dadd; border-radius: 18px 18px 0 0; background: #ededed; overflow: hidden; }
.world svg { display: block; width: 100%; }
.world span { position: absolute; left: 128px; top: -3px; font: 10px/14px "Noto Sans", sans-serif; color: #7b7b80; }
```
